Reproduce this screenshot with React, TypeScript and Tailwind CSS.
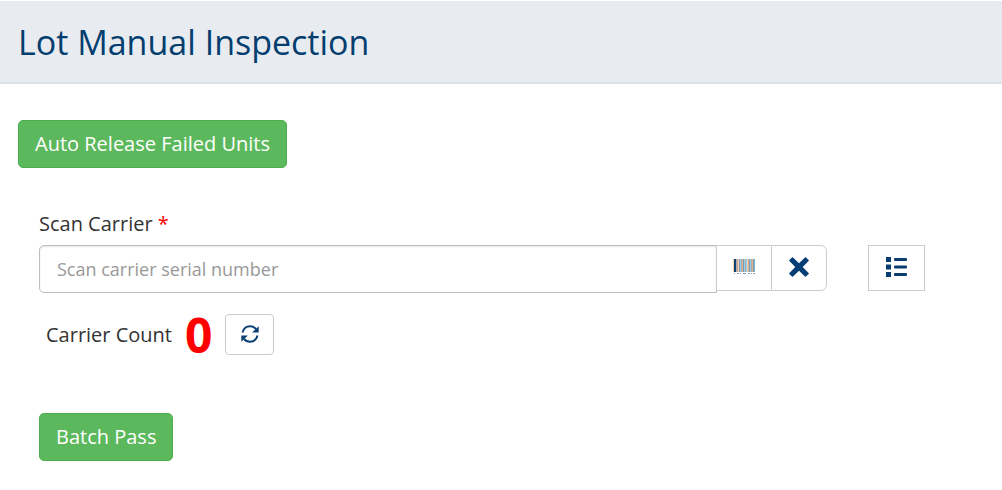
import { useState } from "react";

function BarcodeIcon() {
  return (
    <svg width="22" height="16" viewBox="0 0 22 16" aria-hidden="true" shapeRendering="crispEdges">
      <path fill="#f3cfb0" d="M0 0h1v13H0zM5 0h1v13H5zM14 0h1v13h-1z" />
      <path fill="#0b4373" d="M1 0h2v13H1z" />
      <path fill="#b9a9a0" d="M3 0h2v13H3zM8 0h1v13H8zM12 0h1v13h-1zM18 0h1v13h-1z" />
      <path fill="#7d9db4" d="M6 0h1v13H6zM10 0h1v13h-1zM16 0h1v13h-1zM20 0h1v13h-1z" />
      <path fill="#8fd0ee" d="M7 0h1v13H7zM11 0h1v13h-1zM13 0h1v13h-1zM17 0h1v13h-1z" />
      <path fill="#dcb090" d="M9 0h1v13H9zM15 0h1v13h-1zM19 0h1v13h-1z" />
      <path fill="#70b8cd" d="M21 0h1v13h-1z" />
      <path fill="#8ba0b3" d="M1 14h1v1H1zM4 14h2v1H4zM7 14h1v1H7zM10 14h3v1h-3zM15 14h2v1h-2zM18 14h1v1h-1zM20 14h2v1h-2z" />
    </svg>
  );
}

function RemoveIcon() {
  return (
    <svg width="20" height="20" viewBox="0 0 20 20" aria-hidden="true">
      <path
        d="M4 0.4 10 6.3 16 0.4a.7.7 0 0 1 1 0L19.6 3a.7.7 0 0 1 0 1L13.7 10l5.9 6a.7.7 0 0 1 0 1L17 19.6a.7.7 0 0 1-1 0L10 13.7 4 19.6a.7.7 0 0 1-1 0L.4 17a.7.7 0 0 1 0-1L6.3 10 .4 4a.7.7 0 0 1 0-1L3 .4a.7.7 0 0 1 1 0Z"
        fill="#043e75"
      />
    </svg>
  );
}

function ListIcon() {
  return (
    <svg width="21" height="20" viewBox="0 0 21 20" aria-hidden="true" fill="#0a3c70">
      <path d="M0 0h5v5H0zM0 7.500h5v5H0zM0 15h5v5H0z" />
      <rect x="8" y="1" width="13" height="3" rx="1" />
      <rect x="8" y="8.500" width="13" height="3" rx="1" />
      <rect x="8" y="16" width="13" height="3" rx="1" />
    </svg>
  );
}

function RefreshIcon() {
  return (
    <svg width="18" height="18" viewBox="0 0 18 18" aria-hidden="true">
      <path d="M1.5 7.500C2.6 3.6 5.4 1.3 9 1.3c2.5 0 4.6 1 6 2.9M16.5 10.500c-1.1 3.900-3.900 6.200-7.500 6.200-2.500 0-4.600-1-6-2.900" fill="none" stroke="#0a4076" strokeWidth="2" />
      <path d="M17.700 1.300v6.200h-6.600ZM.3 16.700v-6.200h6.600Z" fill="#0a4076" />
    </svg>
  );
}

const successButton =
  "rounded-[5px] border border-[#4cae4c] bg-[#5cb85c] px-4 py-2 text-xl leading-[30px] text-white";
const iconButton = "flex items-center justify-center border border-[#ccc] bg-white";

export default function App() {
  const [serial, setSerial] = useState("");

  return (
    <div className="bg-white pt-px font-['Open_Sans',sans-serif] text-xl text-[#333]">
      <header className="border-b-2 border-[#dfe1ea] bg-[#e8ebf0] px-[18px] pt-[21px] pb-5">
        <h1 className="text-[34px] leading-[40px] text-[#043e6f]">Lot Manual Inspection</h1>
      </header>
      <main className="px-[18px] pt-9">
        <button type="button" className={successButton}>
          Auto Release Failed Units
        </button>
        <form className="pt-[41px] pr-[59px] pl-[21px]" onSubmit={(e) => e.preventDefault()}>
          <label htmlFor="carrier" className="block pb-1.5 leading-[30px] font-medium">
            Scan Carrier <span className="text-[#f00]">*</span>
          </label>
          <div className="flex items-start gap-[41px]">
            <div className="flex flex-1 items-start">
              <input
                id="carrier"
                type="text"
                value={serial}
                onChange={(e) => setSerial(e.target.value)}
                placeholder="Scan carrier serial number"
                className="h-12 min-w-0 flex-1 rounded-l-[5px] border border-[#bbbdc0] px-[17px] text-lg shadow-[inset_0_1px_2px_rgba(0,0,0,0.1)] placeholder:text-[#999]"
              />
              <button type="button" aria-label="Scan barcode" className={`${iconButton} -ml-px h-[46px] w-14 pb-0.5`}>
                <BarcodeIcon />
              </button>
              <button
                type="button"
                aria-label="Clear"
                onClick={() => setSerial("")}
                className={`${iconButton} -ml-px h-[46px] w-14 rounded-r-md pb-0.5`}
              >
                <RemoveIcon />
              </button>
            </div>
            <button type="button" aria-label="Show list" className={`${iconButton} h-[46px] w-[57px] pb-0.5`}>
              <ListIcon />
            </button>
          </div>
          <div className="flex items-center pt-[19px] pl-[7px]">
            <span className="pt-0.5">Carrier Count</span>
            <output className="px-[13px] pt-0.5 text-5xl leading-[42px] font-bold text-[#f00]">0</output>
            <button type="button" aria-label="Refresh count" className={`${iconButton} h-[41px] w-[49px] rounded-[4px]`}>
              <RefreshIcon />
            </button>
          </div>
          <button type="button" className={`${successButton} mt-[57px]`}>
            Batch Pass
          </button>
        </form>
      </main>
    </div>
  );
}
